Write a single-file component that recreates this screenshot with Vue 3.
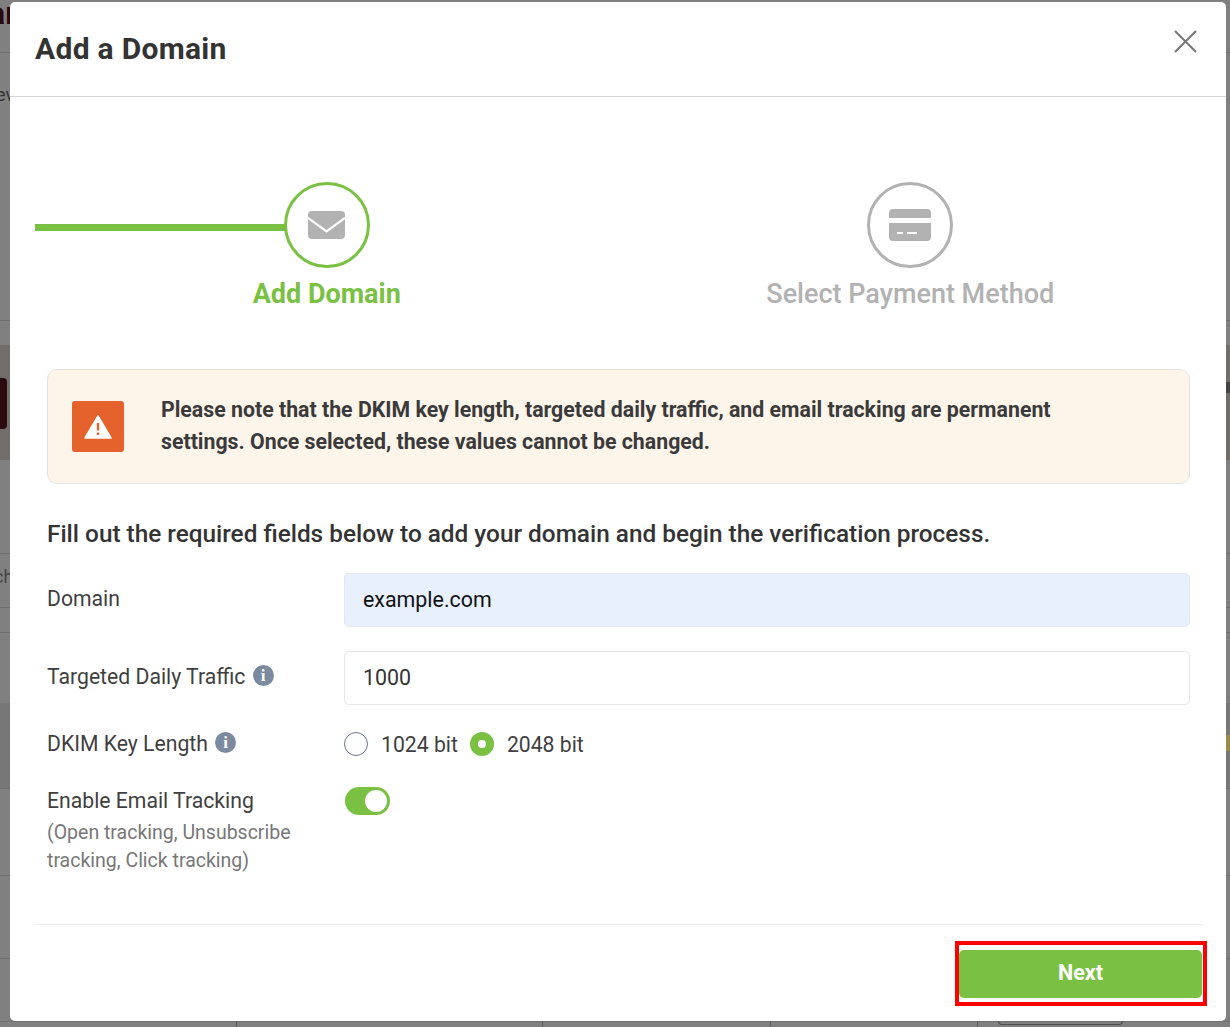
<template>
  <div class="screen">
    <!-- page behind the dialog, only its edges show -->
    <div class="backdrop">
      <span class="bg-band bg-band-warm"></span>
      <span class="bg-band bg-band-dark"></span>
      <span v-for="y in bgLines" :key="y" class="bg-line" :style="{ top: y + 'px' }"></span>
      <span v-for="x in bgTicks" :key="x" class="bg-tick" :style="{ left: x + 'px' }"></span>
      <span class="bg-text bg-text-top">ar</span>
      <span class="bg-text bg-text-mid">ev</span>
      <span class="bg-text bg-text-low">ch</span>
      <span class="bg-avatar"></span>
      <span class="bg-right-dark"></span>
      <span class="bg-right-gold"></span>
      <span class="bg-pill"></span>
    </div>

    <div class="modal">
      <header class="modal-header">
        <h2>Add a Domain</h2>
        <button class="close-btn" aria-label="Close">
          <svg viewBox="0 0 24 24" width="24" height="24">
            <path d="M2 2 L23 23 M23 2 L2 23" stroke="#757575" stroke-width="2" fill="none" />
          </svg>
        </button>
      </header>

      <div class="modal-body">
        <div class="steps">
          <div class="step active">
            <div class="step-circle">
              <svg viewBox="0 0 37 28" width="37" height="28">
                <rect width="37" height="28" rx="4" fill="#b2b2b2" />
                <path d="M0 7 L18.5 20.5 L37 7" stroke="#fff" stroke-width="2.2" fill="none" />
              </svg>
            </div>
            <div class="step-label">Add Domain</div>
          </div>
          <div class="step">
            <div class="step-circle">
              <svg viewBox="0 0 42 32" width="42" height="32">
                <path d="M4 0 H38 Q42 0 42 4 V9 H0 V4 Q0 0 4 0 Z" fill="#b2b2b2" />
                <path d="M0 14 H42 V28 Q42 32 38 32 H4 Q0 32 0 28 Z" fill="#b2b2b2" />
                <path d="M8 24 H14 M18 24 H28" stroke="#fff" stroke-width="2" />
              </svg>
            </div>
            <div class="step-label">Select Payment Method</div>
          </div>
        </div>

        <div class="notice">
          <div class="notice-icon">
            <svg viewBox="0 0 28 24" width="28" height="24">
              <path d="M14 1 L27 23 H1 Z" fill="#fff" stroke="#fff" stroke-width="1.5" stroke-linejoin="round" />
              <path d="M14 8 V15.5 M14 17.5 V20" stroke="#e5622d" stroke-width="2.4" />
            </svg>
          </div>
          <p>Please note that the DKIM key length, targeted daily traffic, and email tracking are permanent settings. Once selected, these values cannot be changed.</p>
        </div>

        <p class="intro">Fill out the required fields below to add your domain and begin the verification process.</p>

        <div class="form-row row-domain">
          <label class="field-label lifted">Domain</label>
          <input class="text-input filled" type="text" v-model="domain" />
        </div>

        <div class="form-row row-traffic">
          <label class="field-label lifted">
            Targeted Daily Traffic
            <span class="info">i</span>
          </label>
          <input class="text-input" type="text" v-model="traffic" />
        </div>

        <div class="form-row row-dkim">
          <label class="field-label">
            DKIM Key Length
            <span class="info">i</span>
          </label>
          <div class="radios">
            <label v-for="opt in keyLengths" :key="opt" class="radio-item" @click="keyLength = opt">
              <span class="radio" :class="{ checked: keyLength === opt }"></span>
              {{ opt }} bit
            </label>
          </div>
        </div>

        <div class="form-row row-tracking">
          <div class="field-label">
            Enable Email Tracking
            <div class="field-sub">(Open tracking, Unsubscribe tracking, Click tracking)</div>
          </div>
          <button class="toggle" :class="{ on: tracking }" @click="tracking = !tracking"></button>
        </div>
      </div>

      <footer class="modal-footer">
        <div class="next-wrap">
          <button class="next-btn">Next</button>
          <span class="highlight"></span>
        </div>
      </footer>
    </div>
  </div>
</template>

<script setup>
import { ref } from 'vue'

const domain = ref('example.com')
const traffic = ref('1000')
const keyLengths = [1024, 2048]
const keyLength = ref(2048)
const tracking = ref(true)

const bgLines = [52, 320, 553, 607, 632, 788, 875, 958, 1021]
const bgTicks = [236, 542, 770, 977]
</script>

<style>
html,
body {
  margin: 0;
  background: #808080;
}
</style>

<style scoped>
.screen {
  position: relative;
  width: 1230px;
  height: 1027px;
  overflow: hidden;
  background: #808080;
  font-family: Roboto, 'Liberation Sans', sans-serif;
  color: #333;
  box-sizing: border-box;
  padding: 2px 4px 0 10px;
}

.backdrop {
  position: absolute;
  inset: 0;
}

.bg-band {
  position: absolute;
  left: 0;
  right: 0;
}

.bg-band-warm {
  top: 345px;
  height: 115px;
  background: #716d6b;
}

.bg-band-dark {
  top: 703px;
  height: 85px;
  background: #777;
}

.bg-line {
  position: absolute;
  left: 0;
  right: 0;
  height: 1px;
  background: #6f6f6f;
}

.bg-text {
  position: absolute;
  color: #2a0a0e;
}

.bg-text-top {
  top: -6px;
  left: -12px;
  font-size: 32px;
  font-weight: 700;
}

.bg-text-mid {
  top: 84px;
  left: -4px;
  font-size: 18px;
  color: #333;
}

.bg-text-low {
  top: 566px;
  left: -6px;
  font-size: 18px;
  color: #444;
}

.bg-avatar {
  position: absolute;
  left: -4px;
  top: 378px;
  width: 11px;
  height: 51px;
  border-radius: 4px;
  background: #2a0a0e;
}

.bg-right-dark {
  position: absolute;
  right: 0;
  top: 382px;
  width: 4px;
  height: 11px;
  background: #444;
}

.bg-right-gold {
  position: absolute;
  right: 0;
  top: 735px;
  width: 4px;
  height: 16px;
  background: #9a8a4c;
}

.bg-tick {
  position: absolute;
  bottom: 0;
  width: 1px;
  height: 6px;
  background: #5c5c5c;
}

.bg-pill {
  position: absolute;
  left: 998px;
  bottom: 2px;
  width: 125px;
  height: 5px;
  box-sizing: border-box;
  border: 1px solid #4c4c4c;
  border-top: 0;
  border-radius: 0 0 4px 4px;
}

.modal {
  position: relative;
  width: 1216px;
  height: 1019px;
  background: #fff;
  border-radius: 5px;
  display: flex;
  flex-direction: column;
}

.modal-header {
  height: 94px;
  padding: 0 29px 0 25px;
  border-bottom: 1px solid #d5d5d5;
  display: flex;
  justify-content: space-between;
  align-items: flex-start;
  flex-shrink: 0;
}

.modal-header h2 {
  margin: 29px 0 0;
  font-size: 30px;
  line-height: 36px;
  font-weight: 700;
  letter-spacing: 0.3px;
  color: #333;
}

.close-btn {
  margin-top: 27px;
  padding: 0;
  border: none;
  background: none;
  width: 24px;
  height: 24px;
  cursor: pointer;
}

.modal-body {
  flex: 1;
  padding: 85px 24px 0 25px;
}

.steps {
  display: flex;
  height: 187px;
}

.step {
  flex: 1;
  display: flex;
  flex-direction: column;
  align-items: center;
  position: relative;
}

.step.active::before {
  content: '';
  position: absolute;
  left: 0;
  top: 42px;
  width: 250px;
  height: 7px;
  background: #7ac143;
}

.step-circle {
  position: relative;
  width: 86px;
  height: 86px;
  box-sizing: border-box;
  border: 3px solid #b2b2b2;
  border-radius: 50%;
  background: #fff;
  display: flex;
  align-items: center;
  justify-content: center;
}

.step.active .step-circle {
  border-color: #7ac143;
}

.step-label {
  margin-top: 9px;
  font-size: 27px;
  line-height: 34px;
  font-weight: 500;
  color: #b2b2b2;
}

.step.active .step-label {
  color: #7ac143;
  font-weight: 700;
}

.notice {
  margin: 0 12px;
  height: 115px;
  box-sizing: border-box;
  border: 1px solid #e6e3df;
  border-radius: 10px;
  background: #fdf4ea;
  padding: 0 100px 0 24px;
  display: flex;
  align-items: center;
  gap: 37px;
}

.notice-icon {
  flex-shrink: 0;
  width: 52px;
  height: 51px;
  border-radius: 3px;
  background: #e5622d;
  display: flex;
  align-items: center;
  justify-content: center;
}

.notice p {
  margin: 0;
  padding-bottom: 2px;
  font-size: 21.3px;
  line-height: 32px;
  font-weight: 700;
  color: #3a3a3a;
}

.intro {
  margin: 33px 12px 0;
  font-size: 24.35px;
  line-height: 34px;
  font-weight: 500;
  color: #333;
}

.form-row {
  display: flex;
  margin: 0 12px;
}

.row-domain {
  margin-top: 22px;
  align-items: center;
}

.row-traffic {
  margin-top: 24px;
  align-items: center;
}

.row-dkim {
  margin-top: 25px;
  align-items: center;
}

.row-tracking {
  margin-top: 29px;
}

.field-label {
  width: 297px;
  flex-shrink: 0;
  font-size: 21.2px;
  line-height: 28px;
  color: #3f3f3f;
}

.field-label.lifted {
  padding-bottom: 2px;
}

.field-sub {
  margin-top: 4px;
  font-size: 19.5px;
  line-height: 28px;
  color: #777;
}

.info {
  display: inline-block;
  width: 21px;
  height: 21px;
  margin-left: 2px;
  border-radius: 50%;
  background: #7c8aa0;
  color: #fff;
  font-family: 'Liberation Serif', serif;
  font-size: 17px;
  font-weight: 700;
  line-height: 21px;
  text-align: center;
  vertical-align: 3px;
}

.text-input {
  flex: 1;
  min-width: 0;
  height: 54px;
  box-sizing: border-box;
  border: 1px solid #e4e7ea;
  border-radius: 5px;
  padding: 0 18px 2px;
  font-family: inherit;
  font-size: 21.4px;
  color: #333;
  background: #fff;
  outline: none;
}

.text-input.filled {
  background: #e8f0fe;
  color: #111;
}

.radios {
  display: flex;
  gap: 12px;
  height: 28px;
  align-items: center;
}

.radio-item {
  display: flex;
  align-items: center;
  gap: 13px;
  font-size: 21.2px;
  color: #3f3f3f;
  cursor: pointer;
}

.radio {
  width: 24px;
  height: 24px;
  box-sizing: border-box;
  border: 1px solid #6d7685;
  border-radius: 50%;
  background: #fff;
}

.radio.checked {
  border: 8px solid #7ac143;
}

.toggle {
  width: 45px;
  height: 28px;
  margin-left: 1px;
  padding: 0;
  border: none;
  border-radius: 14px;
  background: #ccc;
  position: relative;
  cursor: pointer;
}

.toggle.on {
  background: #7ac143;
}

.toggle::after {
  content: '';
  position: absolute;
  top: 3px;
  left: 3px;
  width: 22px;
  height: 22px;
  border-radius: 50%;
  background: #fff;
}

.toggle.on::after {
  left: 20px;
}

.modal-footer {
  margin: 0 24px 0 25px;
  height: 97px;
  border-top: 1px solid #eee;
  flex-shrink: 0;
  display: flex;
  justify-content: flex-end;
  box-sizing: border-box;
}

.next-wrap {
  position: relative;
  margin-top: 25px;
  width: 243px;
  height: 48px;
}

.next-btn {
  width: 100%;
  height: 100%;
  padding: 0 0 3px;
  border: none;
  border-radius: 5px;
  background: #7ac143;
  color: #fff;
  font-family: inherit;
  font-size: 21.5px;
  font-weight: 700;
  cursor: pointer;
}

.highlight {
  position: absolute;
  left: -4px;
  top: -9px;
  width: 252px;
  height: 65px;
  box-sizing: border-box;
  border: 4px solid #f00;
  pointer-events: none;
}
</style>
